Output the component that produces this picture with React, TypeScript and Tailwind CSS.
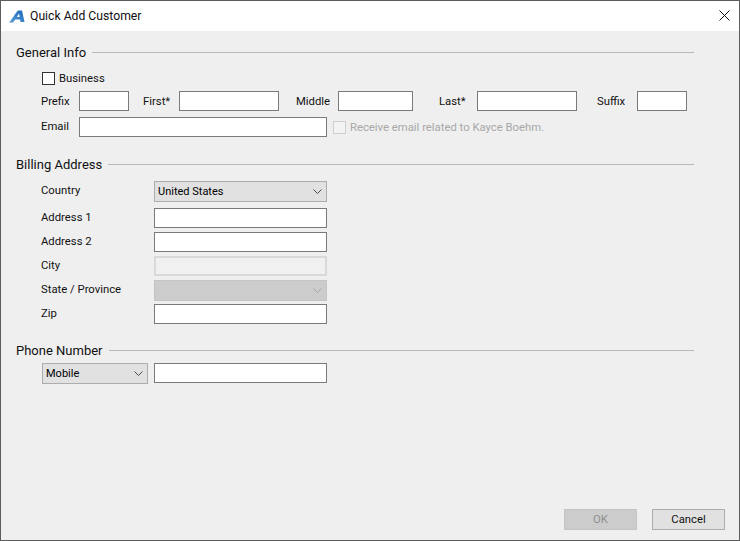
import React from "react";

const font = { fontFamily: 'Roboto, "Noto Sans", sans-serif' };

function Chevron({ color = "#4a4a4a" }: { color?: string }) {
  return (
    <svg width="9" height="5" viewBox="0 0 9 5" fill="none" className="shrink-0">
      <path d="M0.5 0.5 L4.5 4.5 L8.5 0.5" stroke={color} strokeWidth="1" />
    </svg>
  );
}

function Input({ w, disabled }: { w: string; disabled?: boolean }) {
  return (
    <div
      className={
        w +
        " h-[20px] shrink-0 " +
        (disabled ? "border-2 border-[#d9d9d9] bg-[#f0f0f0]" : "border border-[#7a7a7a] bg-white")
      }
    />
  );
}

function Select({ w, text, disabled }: { w: string; text?: string; disabled?: boolean }) {
  return (
    <div
      className={
        w +
        " h-[21px] shrink-0 flex items-center justify-between pl-[3px] pr-[4px] text-[11px] border " +
        (disabled ? "bg-[#cccccc] border-[#c4c4c4]" : "bg-[#e1e1e1] border-[#adadad]")
      }
    >
      <span className="pt-[2px] text-black">{text}</span>
      <Chevron color={disabled ? "#a8a8a8" : "#4a4a4a"} />
    </div>
  );
}

function Heading({ title, className }: { title: string; className: string }) {
  return (
    <div className={"flex items-center gap-[6px] h-[18px] " + className}>
      <span className="pt-[2px] text-[13px] text-[#111] whitespace-nowrap">{title}</span>
      <div className="flex-1 h-[1px] bg-[#b9b9b9]" />
    </div>
  );
}

function InlineField({ label, labelW, inputW, ml }: { label: string; labelW: string; inputW: string; ml: string }) {
  return (
    <div className={"flex items-start " + ml}>
      <span className={labelW + " translate-y-[1px] text-[11.3px] leading-[20px] text-[#111] whitespace-nowrap"}>{label}</span>
      <Input w={inputW} />
    </div>
  );
}

function AddressRow({ label, children, className }: { label: string; children: React.ReactNode; className?: string }) {
  return (
    <div className={"flex items-start pl-[25px] " + (className ?? "")}>
      <span className="w-[113px] pt-[1px] text-[11.3px] leading-[18px] text-[#111] whitespace-nowrap">{label}</span>
      {children}
    </div>
  );
}

export default function App() {
  return (
    <div className="w-[740px] h-[541px] flex flex-col border border-[#5c5c5c] bg-[#efefef] overflow-hidden" style={font}>
      <div className="h-[30px] shrink-0 bg-white flex items-center pl-[8px] pr-[9px]">
        <svg width="16" height="13" viewBox="0 0 16 13" className="shrink-0">
          <defs>
            <linearGradient id="logo" x1="0" y1="1" x2="1" y2="0">
              <stop offset="0" stopColor="#5c9fd8" />
              <stop offset="1" stopColor="#1a68b8" />
            </linearGradient>
          </defs>
          <path
            fillRule="evenodd"
            d="M0 12.5 C3 9.5 6 3.5 9 0.5 L13 0.5 L15.5 12 L11.5 12 L11 9.5 L6.3 9.5 L4 12.5 Z M10 3.5 L10.7 7 L8 7 Z"
            fill="url(#logo)"
          />
        </svg>
        <span className="ml-[5px] text-[12.2px] text-[#111]">Quick Add Customer</span>
        <svg width="11" height="11" viewBox="0 0 11 11" className="ml-auto -translate-y-[1px]" fill="none">
          <path d="M0.5 0.5 L10.5 10.5 M10.5 0.5 L0.5 10.5" stroke="#111" strokeWidth="1" />
        </svg>
      </div>

      <div className="flex-1 flex flex-col">
        <div className="pl-[15px] pr-[45px]">
          <Heading title="General Info" className="mt-[12px]" />

          <div className="mt-[10px] h-[14px] flex items-center pl-[26px]">
            <div className="w-[13px] h-[13px] border border-[#333] bg-white" />
            <span className="ml-[4px] pt-[2px] text-[11.3px] text-[#111]">Business</span>
          </div>

          <div className="mt-[6px] flex pl-[25px]">
            <InlineField label="Prefix" labelW="w-[38px]" inputW="w-[50px]" ml="" />
            <InlineField label="First*" labelW="w-[36px]" inputW="w-[100px]" ml="ml-[14px]" />
            <InlineField label="Middle" labelW="w-[42px]" inputW="w-[75px]" ml="ml-[17px]" />
            <InlineField label="Last*" labelW="w-[38px]" inputW="w-[100px]" ml="ml-[26px]" />
            <InlineField label="Suffix" labelW="w-[40px]" inputW="w-[50px]" ml="ml-[20px]" />
          </div>

          <div className="mt-[6px] flex items-start pl-[25px]">
            <span className="w-[38px] pt-[1px] text-[11.3px] leading-[18px] text-[#111]">Email</span>
            <Input w="w-[248px]" />
            <div className="ml-[6px] mt-[4px] w-[13px] h-[13px] border border-[#cfcfcf] bg-[#f3f3f3] shrink-0" />
            <span className="ml-[4px] mt-[2px] text-[11.3px] leading-[18px] text-[#a8a8a8] whitespace-nowrap">
              Receive email related to Kayce Boehm.
            </span>
          </div>

          <Heading title="Billing Address" className="mt-[18px]" />

          <div className="mt-[8px] flex flex-col gap-[4px]">
            <AddressRow label="Country" className="-mb-[1px]">
              <Select w="w-[173px]" text="United States" />
            </AddressRow>
            <AddressRow label="Address 1" className="mt-[3px]">
              <Input w="w-[173px]" />
            </AddressRow>
            <AddressRow label="Address 2">
              <Input w="w-[173px]" />
            </AddressRow>
            <AddressRow label="City">
              <Input w="w-[173px]" disabled />
            </AddressRow>
            <AddressRow label="State / Province">
              <Select w="w-[173px]" disabled />
            </AddressRow>
            <AddressRow label="Zip" className="-mt-[1px]">
              <Input w="w-[173px]" />
            </AddressRow>
          </div>

          <Heading title="Phone Number" className="mt-[17px]" />

          <div className="mt-[4px] flex items-start pl-[26px]">
            <Select w="w-[106px]" text="Mobile" />
            <div className="ml-[6px]">
              <Input w="w-[173px]" />
            </div>
          </div>
        </div>

        <div className="mt-auto pb-[10px] pr-[14px] flex justify-end gap-[15px]">
          <div className="w-[73px] h-[21px] pt-[2px] flex items-center justify-center bg-[#cccccc] border border-[#c4c4c4] text-[11.3px] text-[#8f8f8f]">
            OK
          </div>
          <div className="w-[73px] h-[21px] pt-[2px] flex items-center justify-center bg-[#e1e1e1] border border-[#adadad] text-[11.3px] text-[#111]">
            Cancel
          </div>
        </div>
      </div>
    </div>
  );
}
